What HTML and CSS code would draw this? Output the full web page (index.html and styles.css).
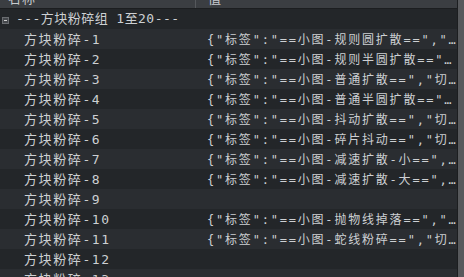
FILE: index.html
```html
<!DOCTYPE html>
<html>
<head>
<meta charset="utf-8">
<link rel="stylesheet" href="styles.css">
</head>
<body>
<div class="view">
  <div class="tree">
    <div class="header">
      <div class="hcell name-col"><span class="htext">名称</span></div>
      <div class="hcell value-col"><span class="htext">值</span></div>
    </div>
    <div class="rows">
      <div class="row group">
        <div class="cell name-col"><span class="toggle"></span><span class="gtext">---方块粉碎组 1至20---</span></div>
        <div class="cell value-col"></div>
      </div>
      <div class="row alt"><div class="cell name-col item">方块粉碎-1</div><div class="cell value-col val">{"标签":"==小图-规则圆扩散==","…</div></div>
      <div class="row"><div class="cell name-col item">方块粉碎-2</div><div class="cell value-col val">{"标签":"==小图-规则半圆扩散=="…</div></div>
      <div class="row alt"><div class="cell name-col item">方块粉碎-3</div><div class="cell value-col val">{"标签":"==小图-普通扩散==","切…</div></div>
      <div class="row"><div class="cell name-col item">方块粉碎-4</div><div class="cell value-col val">{"标签":"==小图-普通半圆扩散=="…</div></div>
      <div class="row alt"><div class="cell name-col item">方块粉碎-5</div><div class="cell value-col val">{"标签":"==小图-抖动扩散==","切…</div></div>
      <div class="row"><div class="cell name-col item">方块粉碎-6</div><div class="cell value-col val">{"标签":"==小图-碎片抖动==","切…</div></div>
      <div class="row alt"><div class="cell name-col item">方块粉碎-7</div><div class="cell value-col val">{"标签":"==小图-减速扩散-小==",…</div></div>
      <div class="row"><div class="cell name-col item">方块粉碎-8</div><div class="cell value-col val">{"标签":"==小图-减速扩散-大==",…</div></div>
      <div class="row alt"><div class="cell name-col item">方块粉碎-9</div><div class="cell value-col val"></div></div>
      <div class="row"><div class="cell name-col item">方块粉碎-10</div><div class="cell value-col val">{"标签":"==小图-抛物线掉落==","…</div></div>
      <div class="row alt"><div class="cell name-col item">方块粉碎-11</div><div class="cell value-col val">{"标签":"==小图-蛇线粉碎==","切…</div></div>
      <div class="row"><div class="cell name-col item">方块粉碎-12</div><div class="cell value-col val"></div></div>
      <div class="row alt"><div class="cell name-col item">方块粉碎-13</div><div class="cell value-col val"></div></div>
    </div>
  </div>
  <div class="scrollbar"></div>
</div>
</body>
</html>
```

FILE: styles.css
```css
html, body {
  margin: 0;
  padding: 0;
  background: #232629;
}
.view {
  display: flex;
  width: 464px;
  height: 277px;
  overflow: hidden;
}
.tree {
  width: 457px;
  display: flex;
  flex-direction: column;
}
.header {
  display: flex;
  height: 8px;
  overflow: hidden;
  background: #3b3e42;
  border-bottom: 1px solid #1c1e20;
  flex: none;
}
.hcell {
  height: 8px;
  overflow: hidden;
  color: #c8cbce;
  font: 13px "Noto Sans CJK SC", sans-serif;
}
.hcell.name-col {
  border-right: 1px solid #55585c;
}
.htext {
  display: block;
  margin-top: -11px;
  line-height: 18px;
  padding-left: 8px;
  letter-spacing: 1px;
}
.hcell.value-col .htext {
  padding-left: 12px;
}
.name-col {
  width: 195px;
  flex: none;
}
.value-col {
  flex: 1;
}
.row {
  display: flex;
  height: 20px;
  background: #232629;
}
.row.alt {
  background: #2a2d31;
}
.cell {
  height: 20px;
  line-height: 22px;
  color: #cdd0d3;
  white-space: nowrap;
  overflow: hidden;
  font-family: "DejaVu Sans Mono", "Noto Sans CJK SC", monospace;
  font-size: 13px;
}
.group .name-col {
  display: flex;
  align-items: center;
}
.toggle {
  width: 7px;
  height: 7px;
  margin-left: 2px;
  margin-top: 3px;
  box-sizing: border-box;
  border: 1px solid #6a6d71;
  background: #45484c;
  position: relative;
  flex: none;
}
.toggle::after {
  content: "";
  position: absolute;
  left: 1px;
  right: 1px;
  top: 2px;
  height: 1px;
  background: #d0d0d0;
}
.gtext {
  margin-left: 7px;
  line-height: 22px;
  letter-spacing: 0.45px;
}
.item {
  padding-left: 24px;
  box-sizing: border-box;
  letter-spacing: 1.6px;
}
.val {
  padding-left: 12px;
  font-size: 12px;
  letter-spacing: 1.8px;
}
.scrollbar {
  width: 7px;
  flex: none;
  background: #57595c;
  border-left: 1px solid #1c1e20;
  box-sizing: border-box;
}
```
